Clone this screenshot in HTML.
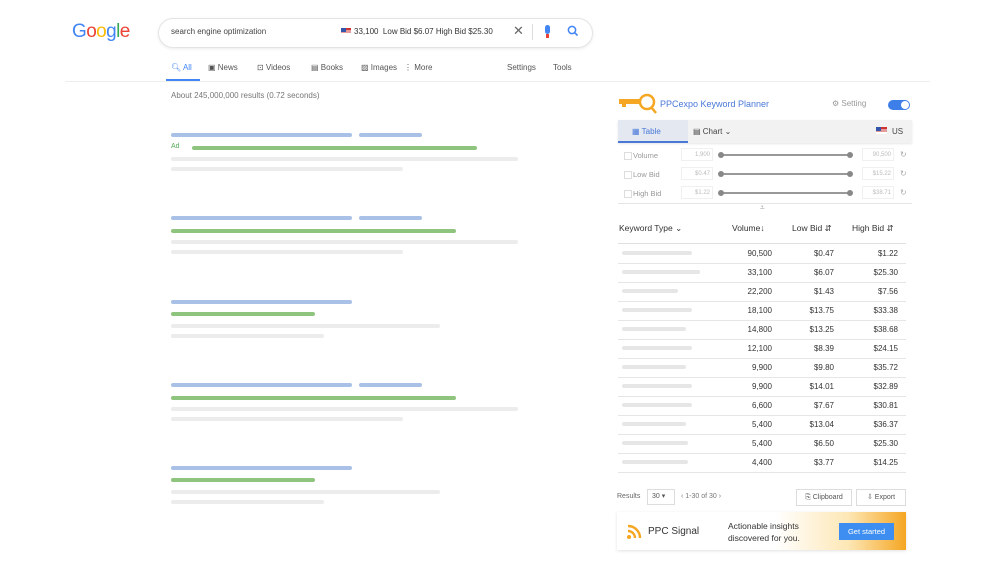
<!DOCTYPE html><html><head><style>
body{margin:0;width:1000px;height:563px;background:#fff;font-family:"Liberation Sans",Arial,sans-serif;position:relative;overflow:hidden}
.a{position:absolute}
.b{position:absolute;height:4px;border-radius:2px}
.bl{background:#a9c1e6}.gr{background:#8fc47e}.gy{background:#ececec}
.t{position:absolute;font-size:8px;color:#555}
.row{position:absolute;left:618px;width:288px;height:19px;border-bottom:1px solid #e6e6e6;font-size:8px;color:#333}
.row span{position:absolute;top:5px;text-align:right}
.sk{position:absolute;left:4px;top:7px;height:4px;background:#e6e6e6;border-radius:2px}
</style></head><body>
<div class="a" style="left:72px;top:21px;font-size:19px;letter-spacing:-0.6px"><span style="color:#4285f4">G</span><span style="color:#ea4335">o</span><span style="color:#fbbc05">o</span><span style="color:#4285f4">g</span><span style="color:#34a853">l</span><span style="color:#ea4335">e</span></div>
<div class="a" style="left:158px;top:18px;width:433px;height:28px;border:1px solid #e4e4e4;border-radius:15px;box-shadow:0 1px 3px rgba(0,0,0,.08)"></div>
<div class="t" style="left:171px;top:27px;color:#444">search engine optimization</div>
<div class="a" style="left:341px;top:28px;width:10px;height:7px;background:linear-gradient(#c33 0 33%,#fff 33% 50%,#c33 50% 66%,#fff 66%);"><div style="width:5px;height:4px;background:#35a"></div></div>
<div class="t" style="left:354px;top:27px;color:#333">33,100 &nbsp;Low Bid $6.07 High Bid $25.30</div>
<div class="a" style="left:513px;top:23px;font-size:13px;color:#666">✕</div>
<div class="a" style="left:532px;top:24px;width:1px;height:16px;background:#ddd"></div>
<div class="a" style="left:545px;top:25px;width:5px;height:9px;border-radius:3px;background:#4285f4"></div>
<div class="a" style="left:546px;top:34px;width:3px;height:4px;background:#ea4335"></div>
<svg class="a" style="left:567px;top:25px" width="12" height="12"><circle cx="5" cy="5" r="3.6" fill="none" stroke="#4285f4" stroke-width="1.5"/><line x1="7.6" y1="7.6" x2="10.5" y2="10.5" stroke="#4285f4" stroke-width="1.6"/></svg>
<div class="t" style="left:171px;top:63px;color:#4285f4">🔍︎ All</div>
<div class="a" style="left:166px;top:79px;width:34px;height:3px;background:#4285f4"></div>
<div class="t" style="left:208px;top:63px">▣ News</div>
<div class="t" style="left:257px;top:63px">⊡ Videos</div>
<div class="t" style="left:311px;top:63px">▤ Books</div>
<div class="t" style="left:361px;top:63px">▨ Images</div>
<div class="t" style="left:404px;top:63px">⋮ More</div>
<div class="t" style="left:507px;top:63px">Settings</div>
<div class="t" style="left:553px;top:63px">Tools</div>
<div class="a" style="left:65px;top:81px;width:865px;height:1px;background:#eee"></div>
<div class="t" style="left:171px;top:91px;color:#777">About 245,000,000 results (0.72 seconds)</div>
<div class="b bl" style="left:171px;top:133px;width:181px"></div><div class="b bl" style="left:359px;top:133px;width:63px"></div>
<div class="t" style="left:171px;top:143px;color:#5a5;font-size:7px">Ad</div>
<div class="b gr" style="left:192px;top:146px;width:285px"></div>
<div class="b gy" style="left:171px;top:157px;width:347px"></div><div class="b gy" style="left:171px;top:167px;width:232px"></div>
<div class="b bl" style="left:171px;top:216px;width:181px"></div><div class="b bl" style="left:359px;top:216px;width:63px"></div>
<div class="b gr" style="left:171px;top:229px;width:285px"></div>
<div class="b gy" style="left:171px;top:240px;width:347px"></div><div class="b gy" style="left:171px;top:250px;width:232px"></div>
<div class="b bl" style="left:171px;top:300px;width:181px"></div>
<div class="b gr" style="left:171px;top:312px;width:144px"></div>
<div class="b gy" style="left:171px;top:324px;width:269px"></div><div class="b gy" style="left:171px;top:334px;width:153px"></div>
<div class="b bl" style="left:171px;top:383px;width:181px"></div><div class="b bl" style="left:359px;top:383px;width:63px"></div>
<div class="b gr" style="left:171px;top:396px;width:285px"></div>
<div class="b gy" style="left:171px;top:407px;width:347px"></div><div class="b gy" style="left:171px;top:417px;width:232px"></div>
<div class="b bl" style="left:171px;top:466px;width:181px"></div>
<div class="b gr" style="left:171px;top:478px;width:144px"></div>
<div class="b gy" style="left:171px;top:490px;width:269px"></div><div class="b gy" style="left:171px;top:500px;width:153px"></div>
<svg class="a" style="left:619px;top:93px" width="40" height="22"><rect x="0" y="6" width="22" height="5" fill="#f5a623"/><rect x="3" y="11" width="4" height="3" fill="#f5a623"/><circle cx="28" cy="9" r="7" fill="none" stroke="#f5a623" stroke-width="2.5"/><line x1="32" y1="14" x2="37" y2="20" stroke="#f5a623" stroke-width="2.5"/></svg>
<div class="a" style="left:660px;top:99px;font-size:9px;color:#4a78d8">PPCexpo Keyword Planner</div>
<div class="t" style="left:832px;top:99px;color:#999">⚙ Setting</div>
<div class="a" style="left:888px;top:100px;width:22px;height:10px;border-radius:5px;background:#3d7ee8"><div style="position:absolute;right:1px;top:1px;width:8px;height:8px;border-radius:50%;background:#fff"></div></div>
<div class="a" style="left:618px;top:120px;width:294px;height:23px;background:#f2f2f2;box-shadow:0 1px 2px rgba(0,0,0,.1)"></div>
<div class="a" style="left:618px;top:120px;width:70px;height:23px;background:#e3e8f1;border-bottom:2px solid #4a78d8;box-sizing:border-box"></div>
<div class="t" style="left:632px;top:127px;color:#4a78d8">▦ Table</div>
<div class="t" style="left:693px;top:127px;color:#444">▤ Chart ⌄</div>
<div class="a" style="left:876px;top:127px;width:11px;height:7px;background:linear-gradient(#c33 0 33%,#fff 33% 50%,#c33 50% 66%,#fff 66%)"><div style="width:5px;height:4px;background:#35a"></div></div>
<div class="t" style="left:892px;top:127px;color:#444">US</div>
<div id="filters"></div>
<div class="a" style="left:618px;top:203px;width:294px;height:1px;background:#e6e6e6"></div>
<div class="t" style="left:760px;top:203px;color:#999">⩡</div>
<div class="a" style="left:619px;top:223px;font-size:8.5px;color:#333">Keyword Type ⌄</div>
<div class="a" style="left:732px;top:223px;font-size:8.5px;color:#333">Volume↓</div>
<div class="a" style="left:792px;top:223px;font-size:8.5px;color:#333">Low Bid ⇵</div>
<div class="a" style="left:852px;top:223px;font-size:8.5px;color:#333">High Bid ⇵</div>
<div class="a" style="left:618px;top:243px;width:288px;height:1px;background:#e0e0e0"></div>
<div id="rows"></div>
<div class="t" style="left:617px;top:493px;font-size:7px;color:#666">Results</div>
<div class="a" style="left:647px;top:489px;width:26px;height:14px;border:1px solid #ddd;font-size:7px;color:#555;line-height:14px;text-indent:4px">30 ▾</div>
<div class="t" style="left:681px;top:493px;font-size:7px;color:#777">‹ 1-30 of 30 ›</div>
<div class="a" style="left:796px;top:489px;width:54px;height:15px;border:1px solid #ddd;font-size:7px;color:#555;line-height:15px;text-align:center">⎘ Clipboard</div>
<div class="a" style="left:856px;top:489px;width:48px;height:15px;border:1px solid #ddd;font-size:7px;color:#555;line-height:15px;text-align:center">⇩ Export</div>
<div class="a" style="left:617px;top:512px;width:289px;height:38px;background:linear-gradient(90deg,#fff 0,#fff 55%,#fde7b5 80%,#f5a623 100%);box-shadow:0 1px 3px rgba(0,0,0,.12)"></div>
<svg class="a" style="left:626px;top:522px" width="18" height="18"><circle cx="3" cy="15" r="2" fill="#f5a623"/><path d="M2 9a7 7 0 0 1 7 7M2 4a12 12 0 0 1 12 12" fill="none" stroke="#f5a623" stroke-width="2.4"/></svg>
<div class="a" style="left:648px;top:526px;font-size:10px;color:#333">PPC Signal</div>
<div class="a" style="left:728px;top:520px;font-size:8.5px;color:#333;line-height:12px">Actionable insights<br>discovered for you.</div>
<div class="a" style="left:839px;top:523px;width:55px;height:17px;background:#3d8ef0;color:#fff;font-size:7.5px;line-height:17px;text-align:center">Get started</div>
<script>
var f='',labs=[['Volume','1,900','90,500'],['Low Bid','$0.47','$15.22'],['High Bid','$1.22','$38.71']];
labs.forEach(function(l,i){var y=150+i*19;
f+='<div class="a" style="left:624px;top:'+(y+2)+'px;width:6px;height:6px;border:1px solid #ddd"></div><div class="t" style="left:633px;top:'+(y+1)+'px;color:#999;font-size:7.5px">'+l[0]+'</div>'+
'<div class="a" style="left:681px;top:'+(y-2)+'px;width:32px;height:13px;border:1px solid #f0f0f0;font-size:6px;color:#bbb;text-align:right;line-height:13px;padding-right:2px;box-sizing:border-box">'+l[1]+'</div>'+
'<div class="a" style="left:721px;top:'+(y+4)+'px;width:130px;height:2px;background:#999"></div><div class="a" style="left:718px;top:'+(y+2)+'px;width:6px;height:6px;border-radius:50%;background:#888"></div><div class="a" style="left:847px;top:'+(y+2)+'px;width:6px;height:6px;border-radius:50%;background:#888"></div>'+
'<div class="a" style="left:862px;top:'+(y-2)+'px;width:32px;height:13px;border:1px solid #f0f0f0;font-size:6px;color:#bbb;text-align:right;line-height:13px;padding-right:2px;box-sizing:border-box">'+l[2]+'</div><div class="t" style="left:900px;top:'+(y)+'px;color:#aaa">↻</div>';});
document.getElementById('filters').outerHTML=f;
var d=[['90,500','$0.47','$1.22',70],['33,100','$6.07','$25.30',78],['22,200','$1.43','$7.56',56],['18,100','$13.75','$33.38',70],['14,800','$13.25','$38.68',64],['12,100','$8.39','$24.15',70],['9,900','$9.80','$35.72',64],['9,900','$14.01','$32.89',70],['6,600','$7.67','$30.81',70],['5,400','$13.04','$36.37',64],['5,400','$6.50','$25.30',66],['4,400','$3.77','$14.25',66]];
var r='';d.forEach(function(x,i){r+='<div class="row" style="top:'+(244+i*19)+'px"><div class="sk" style="width:'+x[3]+'px"></div><span style="right:134px">'+x[0]+'</span><span style="right:72px">'+x[1]+'</span><span style="right:8px">'+x[2]+'</span></div>';});
document.getElementById('rows').outerHTML=r;
</script>
</body></html>
